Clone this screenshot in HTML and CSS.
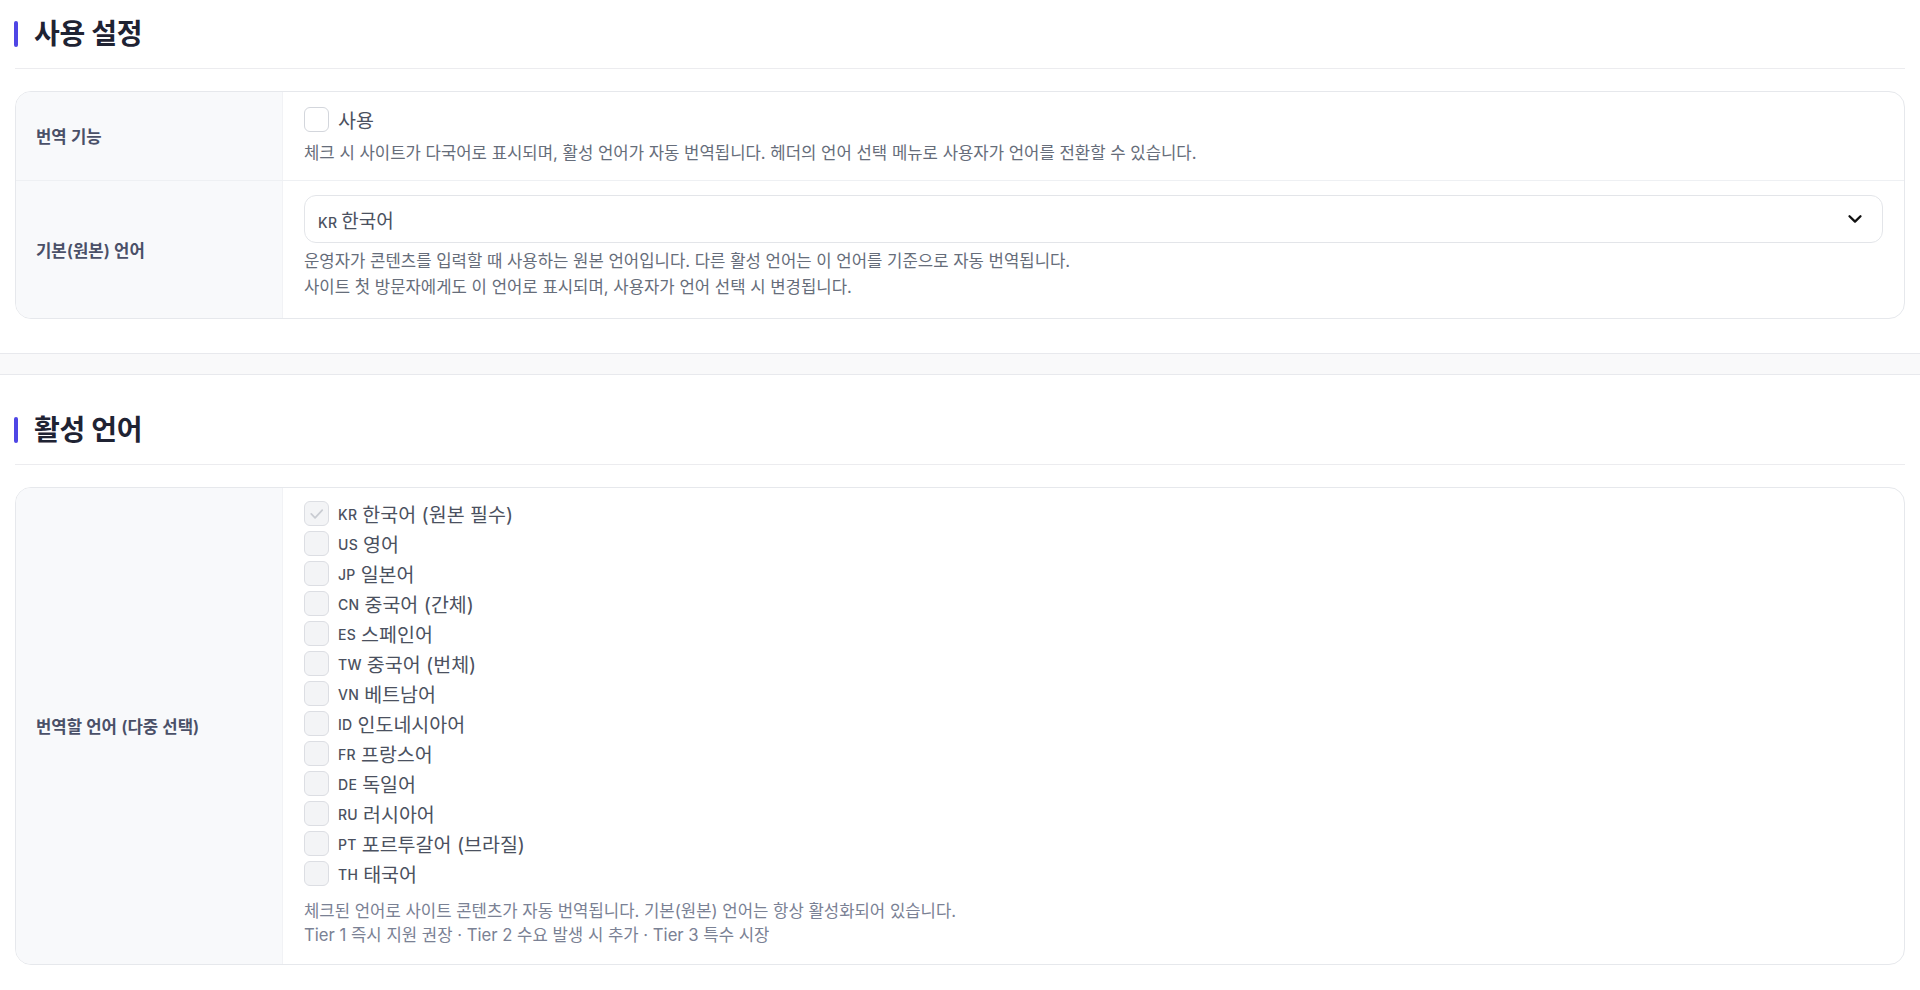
FILE: index.html
```html
<!DOCTYPE html>
<html lang="ko">
<head>
<meta charset="utf-8">
<title>번역 설정</title>
<link rel="stylesheet" href="styles.css">
</head>
<body>
<div class="page">
  <section class="panel panel-first">
    <h2 class="sec-title">사용 설정</h2>
    <div class="card">
      <div class="row row-enable">
        <div class="label">번역 기능</div>
        <div class="field">
          <label class="check-line">
            <span class="box"></span>
            <span class="check-text">사용</span>
          </label>
          <p class="help">체크 시 사이트가 다국어로 표시되며, 활성 언어가 자동 번역됩니다. 헤더의 언어 선택 메뉴로 사용자가 언어를 전환할 수 있습니다.</p>
        </div>
      </div>
      <div class="row row-base">
        <div class="label">기본(원본) 언어</div>
        <div class="field">
          <div class="select">
            <span class="select-value"><span class="flag">KR</span> 한국어</span>
            <svg class="chev" width="16" height="10" viewBox="0 0 16 10"><path d="M2.5 2.2 L8 7.6 L13.5 2.2" stroke="#111" stroke-width="2.3" fill="none" stroke-linecap="round" stroke-linejoin="round"/></svg>
          </div>
          <p class="help help-2">운영자가 콘텐츠를 입력할 때 사용하는 원본 언어입니다. 다른 활성 언어는 이 언어를 기준으로 자동 번역됩니다.<br>사이트 첫 방문자에게도 이 언어로 표시되며, 사용자가 언어 선택 시 변경됩니다.</p>
        </div>
      </div>
    </div>
  </section>

  <div class="divider"></div>

  <section class="panel panel-second">
    <h2 class="sec-title">활성 언어</h2>
    <div class="card">
      <div class="row row-langs">
        <div class="label">번역할 언어 (다중 선택)</div>
        <div class="field">
          <ul class="lang-list">
            <li class="lang"><span class="box box-dis box-checked"><svg viewBox="0 0 24 24" width="24" height="24"><path d="M6.5 12.5 L10.5 16.5 L18 8.5" stroke="#c9ccd2" stroke-width="1.8" fill="none" stroke-linecap="round" stroke-linejoin="round"/></svg></span><span class="flag">KR</span><span class="lang-name">한국어 (원본 필수)</span></li>
            <li class="lang"><span class="box box-dis"></span><span class="flag">US</span><span class="lang-name">영어</span></li>
            <li class="lang"><span class="box box-dis"></span><span class="flag">JP</span><span class="lang-name">일본어</span></li>
            <li class="lang"><span class="box box-dis"></span><span class="flag">CN</span><span class="lang-name">중국어 (간체)</span></li>
            <li class="lang"><span class="box box-dis"></span><span class="flag">ES</span><span class="lang-name">스페인어</span></li>
            <li class="lang"><span class="box box-dis"></span><span class="flag">TW</span><span class="lang-name">중국어 (번체)</span></li>
            <li class="lang"><span class="box box-dis"></span><span class="flag">VN</span><span class="lang-name">베트남어</span></li>
            <li class="lang"><span class="box box-dis"></span><span class="flag">ID</span><span class="lang-name">인도네시아어</span></li>
            <li class="lang"><span class="box box-dis"></span><span class="flag">FR</span><span class="lang-name">프랑스어</span></li>
            <li class="lang"><span class="box box-dis"></span><span class="flag">DE</span><span class="lang-name">독일어</span></li>
            <li class="lang"><span class="box box-dis"></span><span class="flag">RU</span><span class="lang-name">러시아어</span></li>
            <li class="lang"><span class="box box-dis"></span><span class="flag">PT</span><span class="lang-name">포르투갈어 (브라질)</span></li>
            <li class="lang"><span class="box box-dis"></span><span class="flag">TH</span><span class="lang-name">태국어</span></li>
          </ul>
          <p class="help help-3">체크된 언어로 사이트 콘텐츠가 자동 번역됩니다. 기본(원본) 언어는 항상 활성화되어 있습니다.<br>Tier 1 즉시 지원 권장 · Tier 2 수요 발생 시 추가 · Tier 3 특수 시장</p>
        </div>
      </div>
    </div>
  </section>
</div>
</body>
</html>
```

FILE: styles.css
```css
* { box-sizing: border-box; }

html, body {
  margin: 0;
  padding: 0;
  background: #ffffff;
}

body {
  font-family: "Inter", "Noto Sans CJK KR", sans-serif;
  color: #1f2333;
}

.page {
  width: 1920px;
}

.panel {
  background: #ffffff;
  padding: 38px 15px 34px 15px;
}

.panel-first {
  padding-top: 17px;
  border-bottom: 1px solid #e8e9ed;
}

.panel-second {
  border-top: 1px solid #e8e9ed;
  padding-bottom: 0;
}

.divider {
  height: 20px;
  background: #f9f9fa;
}

.sec-title {
  margin: 0;
  display: flex;
  align-items: center;
  gap: 16px;
  font-size: 28px;
  font-weight: 700;
  line-height: 34px;
  color: #1f2333;
  padding-bottom: 17px;
  border-bottom: 1px solid #ececef;
  letter-spacing: -0.3px;
}

.sec-title::before {
  content: "";
  display: block;
  width: 4px;
  height: 26px;
  border-radius: 2px;
  background: #4f46e5;
  margin-left: -1px;
}

.card {
  margin-top: 22px;
  border: 1px solid #e6e8ec;
  border-radius: 16px;
  overflow: hidden;
}

.row {
  display: grid;
  grid-template-columns: 267px 1fr;
}

.row + .row {
  border-top: 1px solid #eef0f3;
}

.label {
  background: #f8f9fb;
  border-right: 1px solid #f1f2f5;
  display: flex;
  align-items: center;
  padding: 0 20px;
  font-size: 16.7px;
  font-weight: 600;
  color: #4a5068;
}

.field {
  padding: 14px 21px 14px 21px;
}

.row-base .field {
  padding-bottom: 18px;
}

.row-langs .field {
  padding-top: 10px;
  padding-bottom: 17px;
}

.check-line {
  display: flex;
  align-items: center;
  gap: 9px;
  height: 26px;
}

.box {
  flex: none;
  width: 25px;
  height: 25px;
  border: 1px solid #d3d6dc;
  border-radius: 6px;
  background: #ffffff;
  display: flex;
  align-items: center;
  justify-content: center;
}

.box svg {
  width: 23px;
  height: 23px;
}

.box-dis {
  background: #f3f4f6;
  border-color: #dcdee3;
}

.check-text {
  font-size: 19.5px;
  color: #4b5160;
}

.help {
  margin: 9px 0 0 0;
  font-size: 16.7px;
  line-height: 25px;
  color: #666d7a;
}

.help-2 {
  margin-top: 5px;
  line-height: 26px;
}

.help-3 {
  margin-top: 11px;
  line-height: 24px;
  color: #7a8194;
}

.select {
  height: 48px;
  border: 1px solid #e3e5e9;
  border-radius: 12px;
  background: #ffffff;
  display: flex;
  align-items: center;
  justify-content: space-between;
  padding: 0 19px 0 13px;
}

.select-value {
  font-size: 19px;
  color: #4b5160;
  display: flex;
  align-items: baseline;
  gap: 4px;
}

.flag {
  font-size: 14px;
  font-weight: 500;
  color: #4b5160;
  letter-spacing: 0.3px;
}

.chev {
  display: block;
}

.lang-list {
  list-style: none;
  margin: 0;
  padding: 0;
}

.lang {
  height: 30px;
  display: flex;
  align-items: center;
}

.lang .box {
  margin-right: 9px;
}

.lang .flag {
  margin-right: 5px;
  align-self: center;
  padding-top: 3px;
}

.lang-name {
  font-size: 19.5px;
  color: #4b5160;
}
```
